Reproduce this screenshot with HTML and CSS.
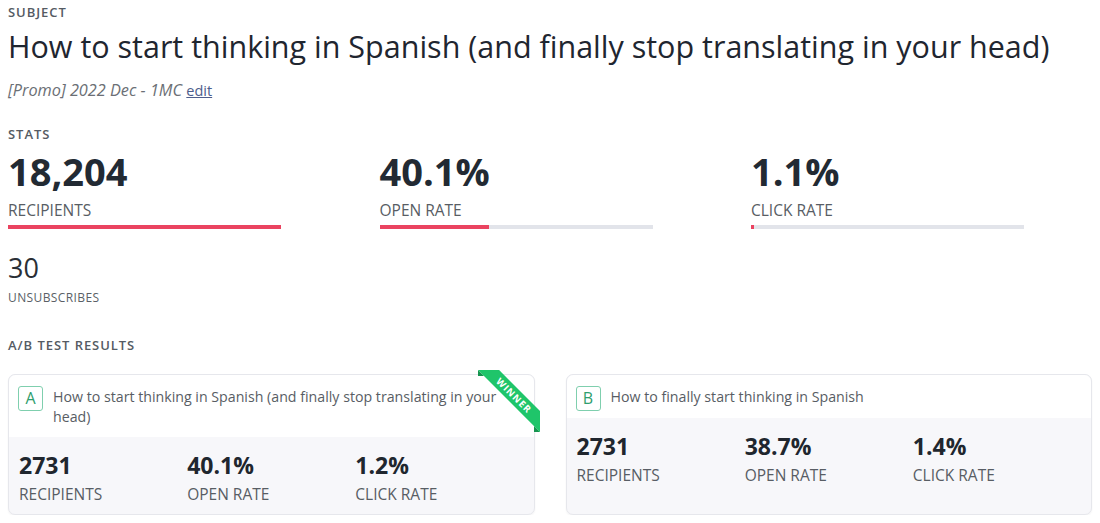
FILE: index.html
```html
<!DOCTYPE html>
<html lang="en">
<head>
<meta charset="utf-8">
<title>Campaign report</title>
<link rel="stylesheet" href="styles.css">
</head>
<body>
<main class="page">
  <div class="section-label subject-label">SUBJECT</div>
  <h1 class="subject">How to start thinking in Spanish (and finally stop translating in your head)</h1>
  <p class="campaign"><em>[Promo] 2022 Dec - 1MC</em> <a href="#" class="edit">edit</a></p>

  <div class="section-label stats-label">STATS</div>
  <div class="stats">
    <div class="stat">
      <div class="stat-value">18,204</div>
      <div class="stat-name">RECIPIENTS</div>
      <div class="bar"><div class="bar-fill" style="width:100%"></div></div>
    </div>
    <div class="stat">
      <div class="stat-value">40.1%</div>
      <div class="stat-name">OPEN RATE</div>
      <div class="bar"><div class="bar-fill" style="width:40.1%"></div></div>
    </div>
    <div class="stat">
      <div class="stat-value">1.1%</div>
      <div class="stat-name">CLICK RATE</div>
      <div class="bar"><div class="bar-fill" style="width:1.1%"></div></div>
    </div>
  </div>

  <div class="unsub">
    <div class="unsub-value">30</div>
    <div class="unsub-name">UNSUBSCRIBES</div>
  </div>

  <div class="section-label ab-label">A/B TEST RESULTS</div>
  <div class="ab-grid">
    <div class="ab-card">
      <div class="ribbon"><span>WINNER</span></div>
      <div class="ab-head">
        <span class="badge">A</span>
        <span class="ab-title">How to start thinking in Spanish (and finally stop translating in your head)</span>
      </div>
      <div class="ab-body">
        <div class="ab-stat"><div class="ab-value">2731</div><div class="ab-name">RECIPIENTS</div></div>
        <div class="ab-stat"><div class="ab-value">40.1%</div><div class="ab-name">OPEN RATE</div></div>
        <div class="ab-stat"><div class="ab-value">1.2%</div><div class="ab-name">CLICK RATE</div></div>
      </div>
    </div>
    <div class="ab-card">
      <div class="ab-head">
        <span class="badge">B</span>
        <span class="ab-title">How to finally start thinking in Spanish</span>
      </div>
      <div class="ab-body">
        <div class="ab-stat"><div class="ab-value">2731</div><div class="ab-name">RECIPIENTS</div></div>
        <div class="ab-stat"><div class="ab-value">38.7%</div><div class="ab-name">OPEN RATE</div></div>
        <div class="ab-stat"><div class="ab-value">1.4%</div><div class="ab-name">CLICK RATE</div></div>
      </div>
    </div>
  </div>
</main>
</body>
</html>
```

FILE: styles.css
```css
* { box-sizing: border-box; }

body {
  margin: 0;
  background: #ffffff;
  font-family: "Open Sans", "Noto Sans", sans-serif;
  color: #222a33;
}

.page {
  padding: 4px 8px 0 8px;
}

.section-label {
  font-size: 13px;
  line-height: 16px;
  font-weight: 600;
  letter-spacing: 0.95px;
  color: #555b63;
}

.subject {
  margin: 8px 0 0 0;
  font-size: 30.5px;
  line-height: 36px;
  font-weight: 400;
  color: #1f2630;
}

.campaign {
  margin: 16px 0 0 0;
  font-size: 16.3px;
  line-height: 20px;
  color: #6b6f75;
}

.edit {
  font-size: 14.5px;
  color: #4e5d8c;
  text-decoration: underline;
}

.stats-label {
  margin-top: 25px;
}

.stats {
  display: grid;
  grid-template-columns: repeat(3, 273px);
  column-gap: 98.5px;
  margin-top: 6px;
}

.stat-value {
  font-size: 38px;
  line-height: 46px;
  font-weight: 700;
  color: #222a33;
}

.stat-name {
  font-size: 15.5px;
  line-height: 22px;
  color: #585d64;
  margin-top: 5px;
}

.bar {
  height: 4px;
  margin-top: 4px;
  background: #e2e4ea;
}

.bar-fill {
  height: 100%;
  background: #ea4360;
}

.unsub {
  margin-top: 22px;
}

.unsub-value {
  font-size: 27px;
  line-height: 34px;
  color: #2a2f36;
}

.unsub-name {
  font-size: 12px;
  line-height: 16px;
  letter-spacing: 0.4px;
  color: #5a5f66;
  margin-top: 5px;
}

.ab-label {
  margin-top: 31px;
}

.ab-grid {
  display: grid;
  grid-template-columns: 1fr 1fr;
  column-gap: 31px;
  margin-top: 21px;
}

.ab-card {
  position: relative;
  border: 1px solid #e6e7ec;
  border-radius: 7px;
  background: #f7f7fa;
  box-shadow: 0 1px 2px rgba(30, 40, 60, 0.05);
  display: flex;
  flex-direction: column;
}

.ab-head {
  display: flex;
  align-items: flex-start;
  gap: 10px;
  padding: 11px 36px 7px 9px;
  background: #ffffff;
  border-radius: 7px 7px 0 0;
}

.badge {
  flex: none;
  width: 25px;
  height: 25px;
  border: 1px solid #7fcfae;
  border-radius: 3px;
  color: #2f9e6e;
  font-size: 16px;
  line-height: 23px;
  text-align: center;
}

.ab-title {
  font-size: 14.2px;
  line-height: 20px;
  color: #585d64;
  padding: 1px 0 3px 0;
}

.ab-body {
  flex: 1;
  display: grid;
  grid-template-columns: repeat(3, 1fr);
  padding: 14px 10px 10px 10px;
  border-radius: 0 0 7px 7px;
}

.ab-value {
  font-size: 23px;
  line-height: 28px;
  font-weight: 700;
  color: #20262e;
}

.ab-name {
  font-size: 15.5px;
  line-height: 20px;
  color: #585d64;
  margin-top: 5px;
}

.ribbon {
  position: absolute;
  top: -5px;
  right: -6px;
  width: 62px;
  height: 62px;
  overflow: hidden;
  z-index: 2;
}

.ribbon::before,
.ribbon::after {
  content: "";
  position: absolute;
  border: 3px solid #17934f;
  z-index: 0;
}

.ribbon::before {
  top: 0;
  left: 0;
  border-top-color: transparent;
  border-right-color: transparent;
}

.ribbon::after {
  bottom: 0;
  right: 0;
  border-top-color: transparent;
  border-right-color: transparent;
}

.ribbon span {
  position: absolute;
  z-index: 1;
  left: -15px;
  top: 18px;
  width: 102px;
  height: 15px;
  transform: rotate(45deg);
  background: #1fc56a;
  color: #ffffff;
  font-size: 9.5px;
  line-height: 15px;
  font-weight: 700;
  letter-spacing: 1px;
  text-align: center;
}
```
